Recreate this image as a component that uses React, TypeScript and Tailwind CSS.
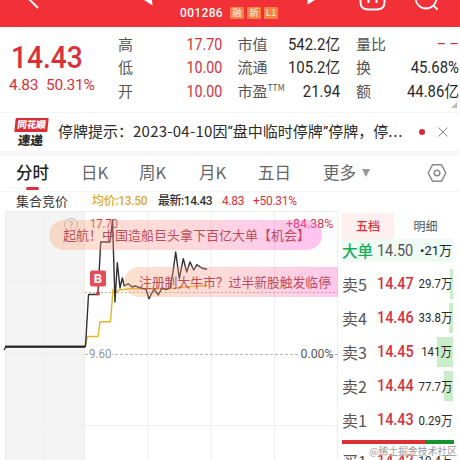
import React from "react";

const digits = "font-['Roboto','Noto_Sans_CJK_SC',sans-serif]";

function Stat({ label, sup, value, red }: { label: string; sup?: string; value: string; red?: boolean }) {
  return (
    <div className="flex h-[23.5px] items-center justify-between whitespace-nowrap">
      <span className="-mt-[2px] flex text-[15px] text-[#555]">
        {label}
        {sup && <span className="-mt-px text-[8.5px] leading-[16px]">{sup}</span>}
      </span>
      <span className={`${digits} origin-right text-[16px] ${red ? "scale-x-[.89] text-[#d5303a]" : "scale-x-[.93] text-[#292929]"}`}>{value}</span>
    </div>
  );
}

function Header() {
  return (
    <header className="flex h-[27px] shrink-0 bg-[#f23038] text-white">
      <svg viewBox="0 0 460 27" className="h-[27px] w-[460px] shrink-0" fill="none">
        <path d="M28 -2 L38 8" stroke="#fff" strokeWidth="2" />
        <path d="M144 0 L152.5 5.5 L152 0Z" fill="#fff" />
        <path d="M307.5 0 L307.5 4.5 L315 0Z" fill="#fff" />
        <path d="M360.5 -1 V2 Q360.5 9.5 368 9.5 H377 Q384.5 9.5 384.5 2 V-1" stroke="#fff" strokeWidth="2" />
        <path d="M368.5 -1 V3 M376.5 -1 V3" stroke="#fff" strokeWidth="2" />
        <circle cx="426" cy="-2" r="10.5" stroke="#fff" strokeWidth="1.8" />
        <path d="M433 5 L437.5 9.5" stroke="#fff" strokeWidth="1.8" />
      </svg>
      <div className="-ml-[280px] mt-[6px] flex h-[14px] items-center gap-[3px]">
        <span className={`${digits} mr-[3px] w-[44px] text-[12px] font-medium tracking-[.35px]`}>001286</span>
        {["融", "新", "L1"].map((x) => (
          <span key={x} className="flex h-[12px] w-[14px] items-center justify-center rounded-[1px] bg-[#f58245] text-[9.5px] leading-none text-[#fff2dc]">{x}</span>
        ))}
      </div>
    </header>
  );
}

function Summary() {
  return (
    <section className="flex h-[85px] shrink-0 pt-[6px]">
      <div className={`${digits} w-[118px] whitespace-nowrap pl-[9px] text-[#dc3039]`}>
        <div className="ml-[2px] mt-[7px] h-[34px] w-[81px] origin-left scale-x-[.88] text-[32px] font-medium leading-[34px]">14.43</div>
        <div className="mt-px flex h-[20px] gap-[9px] text-[15.5px] leading-[20px]">
          <span className="w-[28px] tracking-[-.25px]">4.83</span>
          <span className="tracking-[-.3px]">50.31%</span>
        </div>
      </div>
      <div className="w-[104px]">
        <Stat label="高" value="17.70" red />
        <Stat label="低" value="10.00" red />
        <Stat label="开" value="10.00" red />
      </div>
      <div className="ml-[15.5px] w-[103px]">
        <Stat label="市值" value="542.2亿" />
        <Stat label="流通" value="105.2亿" />
        <Stat label="市盈" sup="TTM" value="21.94" />
      </div>
      <div className="ml-[15.5px] w-[103px]">
        <Stat label="量比" value="– –" red />
        <Stat label="换" value="45.68%" />
        <Stat label="额" value="44.86亿" />
      </div>
      <svg viewBox="0 0 6 6" className="-ml-[8px] mt-[69px] h-[6px] w-[6px] shrink-0"><path d="M6 0V6H0Z" fill="#bbb" /></svg>
    </section>
  );
}

function Notice() {
  return (
    <section className="flex h-[39px] shrink-0 items-center border-t border-[#f5f5f5] pl-[13px] text-[#2b2b2b]">
      <div className="flex h-[28px] w-[36px] flex-col items-center">
        <span className="flex h-[14px] w-[33px] shrink-0 -skew-x-6 items-center justify-center rounded-[1px] bg-[#dc2d37] text-[9.5px] font-black leading-none text-white">同花顺</span>
        <span className="mt-[1px] -skew-x-6 text-[12.5px] font-black leading-[13px]">速递</span>
      </div>
      <div className="ml-[9px] w-[348px] whitespace-nowrap text-[15px]">
        停牌提示：<span className="tracking-[.25px]">2023-04-10</span>因<span className={digits}>“</span>盘中临时停牌<span className={digits}>”</span>停牌，停<span className="tracking-[.8px]">...</span>
      </div>
      <span className="ml-[13px] h-[6px] w-[6px] rounded-full bg-[#dd2932]" />
      <svg viewBox="0 0 10 10" className="ml-[13px] h-[10px] w-[10px]"><path d="M.5.5 9.5 9.5M9.5.5.5 9.5" stroke="#888" /></svg>
    </section>
  );
}

function Tabs() {
  return (
    <nav className="flex h-[40px] shrink-0 whitespace-nowrap border-t-[5px] border-[#f7f7f7] pl-[16px] text-[16.5px] leading-[33px] text-[#666]">
      <div className="w-[65px] font-medium text-[#222]">
        分时
        <div className="-mt-[2px] ml-[10px] h-[3px] w-[13px] rounded-full bg-[#dd2e3a]" />
      </div>
      <span className="w-[58px]">日K</span>
      <span className="w-[60px]">周K</span>
      <span className="w-[59px]">月K</span>
      <span className="w-[65px]">五日</span>
      <span className="w-[39px]">更多</span>
      <svg viewBox="0 0 8 8" className="mt-[13px] h-[8px] w-[8px]"><path d="M0 0H8L4 8Z" fill="#999" /></svg>
      <svg viewBox="0 0 20 20" className="ml-[57px] mt-[7px] h-[20px] w-[20px]" fill="none" stroke="#8a8a8a" strokeWidth="1.5">
        <path d="M5.5 1.8H14.5L18.8 10L14.5 18.2H5.5L1.2 10Z" strokeLinejoin="round" />
        <circle cx="10" cy="10" r="2.8" />
      </svg>
    </nav>
  );
}

function Legend() {
  return (
    <div className={`${digits} flex h-[20px] shrink-0 items-center whitespace-nowrap border-t border-[#f7f7f7] pl-[16px] text-[12px] leading-[19px] tracking-[-.3px] text-[#333]`}>
      <span className="w-[76px] text-[13px] tracking-normal">集合竞价</span>
      <span className="w-[66px] font-medium text-[#dda82b]">均价:13.50</span>
      <span className="w-[64px] font-medium tracking-[-.45px]">最新:14.43</span>
      <span className="w-[31px] text-[#d9303a]">4.83</span>
      <span className="text-[#d9303a]">+50.31%</span>
    </div>
  );
}

const pill =
  "absolute flex h-[30px] items-center whitespace-nowrap rounded-full bg-linear-to-r from-[#fda774]/35 via-[#ff8088]/30 to-[#ff66dd]/40 text-[#bb4c5c]";

function Chart() {
  return (
    <div className="relative h-[249px] w-[338px] shrink-0 overflow-hidden">
      <svg viewBox="0 211 338 249" className="h-[249px] w-[338px]" fill="none">
        <rect x="5" y="211" width="80" height="249" fill="#f4f4f4" />
        <path d="M5.5 211V460M44.5 211V460M84.5 211V460M148 211V460M211 211V460M274.5 211V460M337.5 211V460M5 211.5H338M5 282.5H85M5 354.5H85M5 425.5H338" stroke="#eeeeee" />
        <circle cx="71" cy="225" r="6.5" stroke="#bbb" />
        <text x="68.5" y="229" fontSize="10" fill="#aaa">?</text>
        <path d="M85 292.5H338" stroke="#c9a98a" strokeDasharray="2 2" />
        <path d="M85 354.5H338" stroke="#b5b5b5" strokeDasharray="3 2" />
        <path d="M85 346L87.5 336.5H98L100 321.7H110.5L113 290L115 293L119 290L133 288.5L165 289L190 286.5L207 285.5" stroke="#e3b62c" strokeWidth="1.4" />
        <path d="M4 350L6 346.5H85.5L88.5 294.5H98L100.7 242H110L112.5 220L115 302L117.3 262.7L120 288L122.3 278L124.3 286L128.3 283.7L132 287L135 286L143.3 288.7L146 289L149 298.7L154 289L158.3 295L162 288L166 289.5L170 288L173 272L175.7 252L179.3 278.7L183.3 258.7L186.7 272L190 262L193.7 270L197 264.7L201.7 268L207 269.3" stroke="#303030" strokeWidth="1.4" strokeLinejoin="round" />
        <path d="M5 346.7H85" stroke="#222" strokeWidth="2" />
        <rect x="90" y="270.5" width="16" height="16" rx="2" fill="#e64c58" />
        <text x="93.8" y="283.2" fontSize="13" fontWeight="700" fill="#fff" className="font-['Roboto']">B</text>
        <path d="M98 286V292" stroke="#e64c58" />
        <circle cx="98" cy="293.5" r="2" fill="#d93643" />
        <rect x="88" y="346" width="24" height="13" fill="#fff" />
        <rect x="300" y="346" width="34" height="13" fill="#fff" />
        <g className="font-['Roboto']" fontSize="13.5">
          <text x="90" y="227.5" textLength="28" lengthAdjust="spacingAndGlyphs" fill="#c93b49">17.70</text>
          <text x="286" y="227.5" textLength="47.5" lengthAdjust="spacingAndGlyphs" fill="#d6364b">+84.38%</text>
          <text x="89" y="358" textLength="22.5" lengthAdjust="spacingAndGlyphs" fill="#929292">9.60</text>
          <text x="300.5" y="358" textLength="33" lengthAdjust="spacingAndGlyphs" fill="#555">0.00%</text>
        </g>
      </svg>
      <div className={`${pill} left-[49px] top-[9px] w-[273px] pl-[14px] text-[13px]`}>起航！中国造船巨头拿下百亿大单【机会】</div>
      <div className={`${pill} left-[124px] top-[56px] w-[240px] pl-[15px] text-[12.8px]`}>注册制大牛市？过半新股触发临停</div>
    </div>
  );
}

const asks = [
  { name: "卖5", price: "14.47", vol: "29.7万", bar: 3 },
  { name: "卖4", price: "14.46", vol: "33.8万", bar: 4 },
  { name: "卖3", price: "14.45", vol: "141万", bar: 16 },
  { name: "卖2", price: "14.44", vol: "77.7万", bar: 9 },
  { name: "卖1", price: "14.43", vol: "0.29万", bar: 0 },
];

function Level({ name, price, vol, bar }: { name: string; price: string; vol: string; bar: number }) {
  return (
    <div className="relative flex h-[34.1px] shrink-0 items-center whitespace-nowrap">
      <div className="absolute right-[7px] top-[2px] h-[30px] bg-[#c9ecc9]" style={{ width: bar }} />
      <span className="relative w-[35px] shrink-0 text-[16px] text-[#555]">{name}</span>
      <span className={`${digits} relative w-[36px] shrink-0 origin-left scale-x-[.9] text-[16px] font-medium text-[#d6313b]`}>{price}</span>
      <span className={`${digits} relative ml-auto mr-[8px] origin-right scale-x-[.88] text-[13px] text-[#292929]`}>{vol}</span>
    </div>
  );
}

function Book() {
  return (
    <aside className="flex w-[122px] flex-col overflow-hidden pl-[4px]">
      <div className="flex h-[28px] shrink-0 pt-[2px] text-[12px] leading-[25px]">
        <span className="w-[52px] bg-[#fff0f0] text-center font-medium text-[#dc3039]">五档</span>
        <span className="w-[63px] text-center text-[#555]">明细</span>
      </div>
      <div className="mr-[7px] flex h-[23px] shrink-0 items-center whitespace-nowrap bg-[#f0faf5]">
        <span className="w-[35px] shrink-0 text-[15.5px] font-medium text-[#16ad57]">大单</span>
        <span className={`${digits} w-[36px] shrink-0 origin-left scale-x-[.9] text-[16px] text-[#555]`}>14.50</span>
        <span className={`${digits} ml-auto mr-px text-[13px] text-[#222]`}>•21万</span>
      </div>
      <div className="mt-[5px] flex h-[173px] shrink-0 flex-col">
        {asks.map((a) => <Level key={a.name} {...a} />)}
      </div>
      <div className="mr-[6px] flex h-[4px] shrink-0"><i className="w-[83px] bg-[#dd3035]" /><i className="flex-1 bg-[#16942c]" /></div>
      <Level name="买1" price="14.42" vol="10.4万" bar={0} />
    </aside>
  );
}

export default function App() {
  return (
    <main className="relative flex h-[460px] w-[460px] flex-col overflow-hidden bg-white font-['Noto_Sans_CJK_SC',sans-serif]">
      <Header />
      <Summary />
      <Notice />
      <Tabs />
      <Legend />
      <div className="flex h-[249px] shrink-0">
        <Chart />
        <Book />
      </div>
      <div className="absolute bottom-[2px] right-[3px] whitespace-nowrap text-[9.8px] leading-[14px] text-[#999] [text-shadow:0_0_1px_#fff,0_0_2px_#fff]">@稀土掘金技术社区</div>
    </main>
  );
}
